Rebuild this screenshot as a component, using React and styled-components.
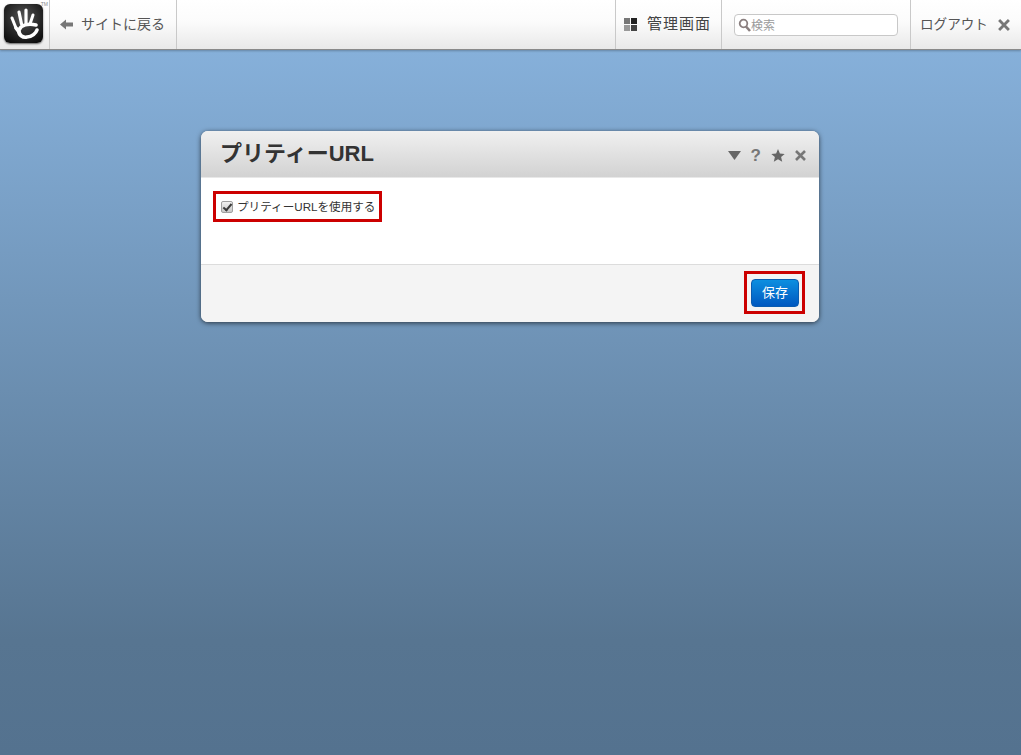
import styled, { createGlobalStyle } from "styled-components";

const GlobalStyle = createGlobalStyle`
  html, body {
    margin: 0;
    height: 100%;
  }
  body {
    font-family: "Liberation Sans", "Noto Sans CJK JP", sans-serif;
    color: #333;
  }
  #root {
    height: 100%;
  }
`;

const Page = styled.div`
  height: 755px;
  overflow: hidden;
  display: flex;
  flex-direction: column;
  background: linear-gradient(to bottom, #86b0da 50px, #577591 640px, #54728f 755px);
`;

const Toolbar = styled.header`
  height: 49px;
  flex: none;
  display: flex;
  background: linear-gradient(to bottom, #ffffff 0%, #fbfbfb 45%, #e9e9e9 100%);
  border-bottom: 1px solid #8a8a8a;
  box-shadow: 0 1px 2px rgba(0, 0, 0, 0.25);
`;

const LogoCell = styled.div`
  width: 49px;
  flex: none;
  position: relative;
  border-right: 1px solid #c9c9c9;
`;

const LogoBadge = styled.div`
  position: absolute;
  left: 4px;
  top: 4px;
  width: 39px;
  height: 39px;
  border-radius: 6px;
  background: radial-gradient(circle at 50% 35%, #555 0%, #262626 55%, #050505 100%);
  box-shadow: 0 1px 2px rgba(0, 0, 0, 0.6);
`;

const Tm = styled.span`
  position: absolute;
  right: 1px;
  top: 1px;
  font-size: 5px;
  color: #888;
`;

const NavItem = styled.div`
  display: flex;
  align-items: center;
  gap: ${({ $gap }) => $gap || 8}px;
  width: ${({ $width }) => $width}px;
  flex: none;
  box-sizing: border-box;
  padding-left: ${({ $pad }) => $pad ?? 10}px;
  border-left: ${({ $leftLine }) => ($leftLine ? "1px solid #c9c9c9" : "none")};
  border-right: ${({ $rightLine }) => ($rightLine ? "1px solid #c9c9c9" : "none")};
  margin-left: ${({ $push }) => ($push ? "auto" : "0")};
`;

const NavLabel = styled.span`
  position: relative;
  top: -2px;
  white-space: nowrap;
  font-size: ${({ $size }) => $size || 14}px;
  letter-spacing: ${({ $spacing }) => $spacing || 0}px;
  color: ${({ $color }) => $color || "#555"};
`;

const SearchBox = styled.div`
  width: 164px;
  height: 22px;
  box-sizing: border-box;
  display: flex;
  align-items: center;
  padding-left: 3px;
  background: #fff;
  border: 1px solid #c8c8c8;
  border-radius: 4px;
  font-size: 12px;
  color: #9a9a9a;
`;

const Stage = styled.main`
  flex: 1;
  display: flex;
  justify-content: center;
  align-items: flex-start;
  padding-top: 81px;
`;

const Dialog = styled.section`
  width: 618px;
  margin-right: 1px;
  border-radius: 7px;
  overflow: hidden;
  background: #fff;
  box-shadow: 0 1px 5px rgba(0, 0, 0, 0.65);
`;

const DialogHeader = styled.div`
  height: 47px;
  box-sizing: border-box;
  display: flex;
  align-items: center;
  justify-content: space-between;
  padding: 0 13px 0 19px;
  background: linear-gradient(to bottom, #f0f0f0, #d2d2d2);
  border-bottom: 1px solid #e8e8e8;
`;

const Title = styled.h1`
  margin: 0 0 7px;
  font-size: 22px;
  font-weight: bold;
  color: #333;
`;

const HeaderIcons = styled.div`
  display: flex;
  align-items: center;
  gap: 10px;
  margin-top: 2px;
`;

const HelpMark = styled.span`
  font-size: 17px;
  font-weight: bold;
  color: #777;
  line-height: 1;
`;

const DialogBody = styled.div`
  height: 87px;
  box-sizing: border-box;
  padding: 13px 12px;
  border-bottom: 1px solid #dcdcdc;
`;

const Marked = styled.div`
  display: ${({ $inline }) => ($inline ? "inline-flex" : "flex")};
  align-items: center;
  box-sizing: border-box;
  border: 3px solid #cc0000;
`;

const CheckLabel = styled.label`
  display: flex;
  align-items: center;
  gap: 4px;
  height: 25px;
  padding: 0 4px 0 5px;
  font-size: 11.6px;
  color: #333;
`;

const CheckText = styled.span`
  position: relative;
  top: -1px;
`;

const Check = styled.input`
  appearance: none;
  position: relative;
  width: 12px;
  height: 12px;
  margin: 0;
  border: 1px solid #a0a0a0;
  border-radius: 2px;
  background: linear-gradient(to bottom, #f2f2f2, #c8c8c8);

  &::after {
    content: "";
    position: absolute;
    left: 3px;
    top: 0;
    width: 3px;
    height: 7px;
    border: solid #3c3c3c;
    border-width: 0 2px 2px 0;
    transform: rotate(40deg);
  }
`;

const DialogFooter = styled.div`
  height: 57px;
  box-sizing: border-box;
  display: flex;
  justify-content: flex-end;
  align-items: flex-start;
  padding: 6px 14px 0 0;
  background: #f4f4f4;
`;

const SaveButton = styled.button`
  width: 48px;
  height: 28px;
  margin: 5px 3px 4px 4px;
  border: 1px solid #0a5cb0;
  border-radius: 4px;
  background: linear-gradient(to bottom, #0c8fe0, #0058c0);
  color: #fff;
  font-family: inherit;
  font-size: 13px;
  padding: 0 0 3px;
`;

const HandLogo = () => (
  <svg width="39" height="39" viewBox="0 0 39 39" fill="none" stroke="#fff" strokeLinecap="round">
    <path d="M8 14 L12 24" strokeWidth="3" />
    <path d="M15 8 L17.5 20" strokeWidth="3.2" />
    <path d="M22 6 L22 19" strokeWidth="3.2" />
    <path d="M29 11 L26 20" strokeWidth="3" />
    <path d="M32 21 C24 19 17 21 15 26 C14 31 19 34 23 33 C28 33 32 29 33 26" strokeWidth="3.6" />
    <path d="M12 24 L15 28" strokeWidth="3.6" />
  </svg>
);

const ArrowLeft = () => (
  <svg width="13" height="11" viewBox="0 0 13 11" fill="#777">
    <path d="M0 5.5 L6 0.5 V3.5 H13 V7.5 H6 V10.5 Z" />
  </svg>
);

const GridIcon = () => (
  <svg width="13" height="13" viewBox="0 0 13 13">
    <rect x="0" y="0" width="6" height="6" fill="#777" />
    <rect x="7" y="0" width="6" height="6" fill="#222" />
    <rect x="0" y="7" width="6" height="6" fill="#999" />
    <rect x="7" y="7" width="6" height="6" fill="#444" />
  </svg>
);

const SearchIcon = () => (
  <svg width="13" height="14" viewBox="0 0 13 14" fill="none" stroke="#8a7f7f">
    <circle cx="5.5" cy="5.5" r="3.8" strokeWidth="1.8" />
    <path d="M8 8.5 L12 13" strokeWidth="2.6" />
  </svg>
);

const CloseIcon = ({ size = 11, color = "#777" }) => (
  <svg width={size} height={size} viewBox="0 0 11 11" stroke={color} strokeWidth="2.6">
    <path d="M1 1 L10 10 M10 1 L1 10" />
  </svg>
);

const DownIcon = () => (
  <svg width="13" height="9" viewBox="0 0 13 9" fill="#666">
    <path d="M0 0 H13 L6.5 9 Z" />
  </svg>
);

const StarIcon = () => (
  <svg width="14" height="13" viewBox="0 0 14 13" fill="#666">
    <path d="M7 0 L8.9 4.4 L13.7 4.9 L10.1 8 L11.2 12.8 L7 10.3 L2.8 12.8 L3.9 8 L0.3 4.9 L5.1 4.4 Z" />
  </svg>
);

const App = () => {
  return (
    <Page>
      <GlobalStyle />
      <Toolbar>
        <LogoCell>
          <LogoBadge>
            <HandLogo />
          </LogoBadge>
          <Tm>TM</Tm>
        </LogoCell>
        <NavItem $width={127} $rightLine>
          <ArrowLeft />
          <NavLabel>サイトに戻る</NavLabel>
        </NavItem>
        <NavItem $push $width={107} $leftLine $rightLine $gap={10} $pad={8}>
          <GridIcon />
          <NavLabel $size={15} $spacing={1} $color="#444">
            管理画面
          </NavLabel>
        </NavItem>
        <NavItem $width={189} $rightLine $pad={12}>
          <SearchBox>
            <SearchIcon />
            検索
          </SearchBox>
        </NavItem>
        <NavItem $width={110} $gap={10} $pad={9}>
          <NavLabel $size={13.6}>ログアウト</NavLabel>
          <CloseIcon size={12} />
        </NavItem>
      </Toolbar>
      <Stage>
        <Dialog>
          <DialogHeader>
            <Title>プリティーURL</Title>
            <HeaderIcons>
              <DownIcon />
              <HelpMark>?</HelpMark>
              <StarIcon />
              <CloseIcon />
            </HeaderIcons>
          </DialogHeader>
          <DialogBody>
            <Marked $inline>
              <CheckLabel>
                <Check type="checkbox" defaultChecked />
                <CheckText>プリティーURLを使用する</CheckText>
              </CheckLabel>
            </Marked>
          </DialogBody>
          <DialogFooter>
            <Marked>
              <SaveButton>保存</SaveButton>
            </Marked>
          </DialogFooter>
        </Dialog>
      </Stage>
    </Page>
  );
};

export default App;
